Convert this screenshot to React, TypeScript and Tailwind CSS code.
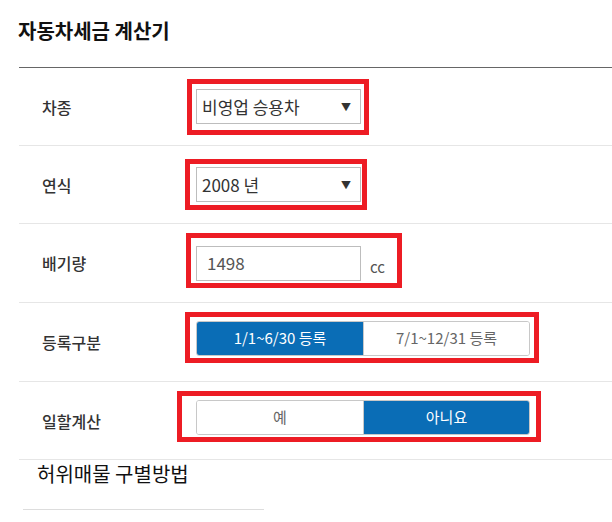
import { useState } from "react";

const BLUE = "bg-[#0a6db6]";

function RedBox({ className }: { className: string }) {
  // annotation frame drawn over the control
  return <div className={`pointer-events-none absolute border-[5px] border-[#ed1c24] ${className}`} />;
}

function Row({ label, h, children }: { label: string; h: string; children: React.ReactNode }) {
  return (
    <div className={`flex items-center border-b border-[#e6e6e6] ${h}`}>
      <div className="w-[177px] pl-[23px] text-[16px] font-medium text-[#333]">{label}</div>
      {children}
    </div>
  );
}

function SelectBox({ value }: { value: string }) {
  return (
    <div className="flex h-[35px] w-[165px] items-center justify-between border border-[#bdbdbd] bg-white pl-[5px] pr-[9px] text-[17px] text-[#333]">
      <span>{value}</span>
      <span className="text-[10px] leading-none text-[#333]">▼</span>
    </div>
  );
}

function Segmented({ options, active, onPick }: { options: string[]; active: number; onPick: (i: number) => void }) {
  return (
    <div className="grid h-[35px] w-[334px] grid-cols-2 overflow-hidden rounded-[3px] border border-[#c8c8c8] text-[15px]">
      {options.map((o, i) => (
        <button
          key={o}
          onClick={() => onPick(i)}
          className={`flex items-center justify-center ${i === 1 ? "border-l border-[#c8c8c8]" : ""} ${
            i === active ? `${BLUE} text-white` : "bg-white text-[#666]"
          }`}
        >
          {o}
        </button>
      ))}
    </div>
  );
}

export default function App() {
  const [period, setPeriod] = useState(0);
  const [daily, setDaily] = useState(1);

  return (
    <div className="h-[522px] w-[612px] overflow-hidden bg-white font-['Noto_Sans_CJK_KR','Noto_Sans',sans-serif]">
      <h1 className="pl-[18px] pt-[19px] text-[20px] font-bold leading-[24px] text-[#111]">자동차세금 계산기</h1>

      <div className="ml-[19px] mt-[24px] border-t border-[#666]">
        <Row label="차종" h="h-[78px]">
          <div className="relative">
            <SelectBox value="비영업 승용차" />
            <RedBox className="-left-[9px] -top-[10px] -right-[8px] -bottom-[11px]" />
          </div>
        </Row>

        <Row label="연식" h="h-[78px]">
          <div className="relative">
            <SelectBox value="2008 년" />
            <RedBox className="-left-[11px] -top-[8px] -right-[6px] -bottom-[8px]" />
          </div>
        </Row>

        <Row label="배기량" h="h-[79px]">
          <div className="flex items-end">
            <div className="relative">
              <div className="flex h-[35px] w-[165px] items-center border border-[#bdbdbd] bg-white pl-[10px] text-[17px] text-[#555]">
                1498
              </div>
              <RedBox className="-left-[10px] -top-[13px] -right-[41px] -bottom-[7px]" />
            </div>
            <span className="mb-[2px] ml-[9px] text-[15px] text-[#555]">cc</span>
          </div>
        </Row>

        <Row label="등록구분" h="h-[79px]">
          <div className="relative mb-[7px]">
            <Segmented options={["1/1~6/30 등록", "7/1~12/31 등록"]} active={period} onPick={setPeriod} />
            <RedBox className="-left-[11px] -top-[9px] -right-[9px] -bottom-[7px]" />
          </div>
        </Row>

        <Row label="일할계산" h="h-[78px]">
          <div className="relative mb-[6px]">
            <Segmented options={["예", "아니요"]} active={daily} onPick={setDaily} />
            <RedBox className="-left-[19px] -top-[9px] -right-[11px] -bottom-[7px]" />
          </div>
        </Row>
      </div>

      <div className="ml-[19px]">
        <p className="pl-[18px] text-[20px] leading-[28px] text-[#111]">허위매물 구별방법</p>
        <div className="ml-[4px] mt-[21px] w-[241px] border-t border-[#dddddd]" />
      </div>
    </div>
  );
}
